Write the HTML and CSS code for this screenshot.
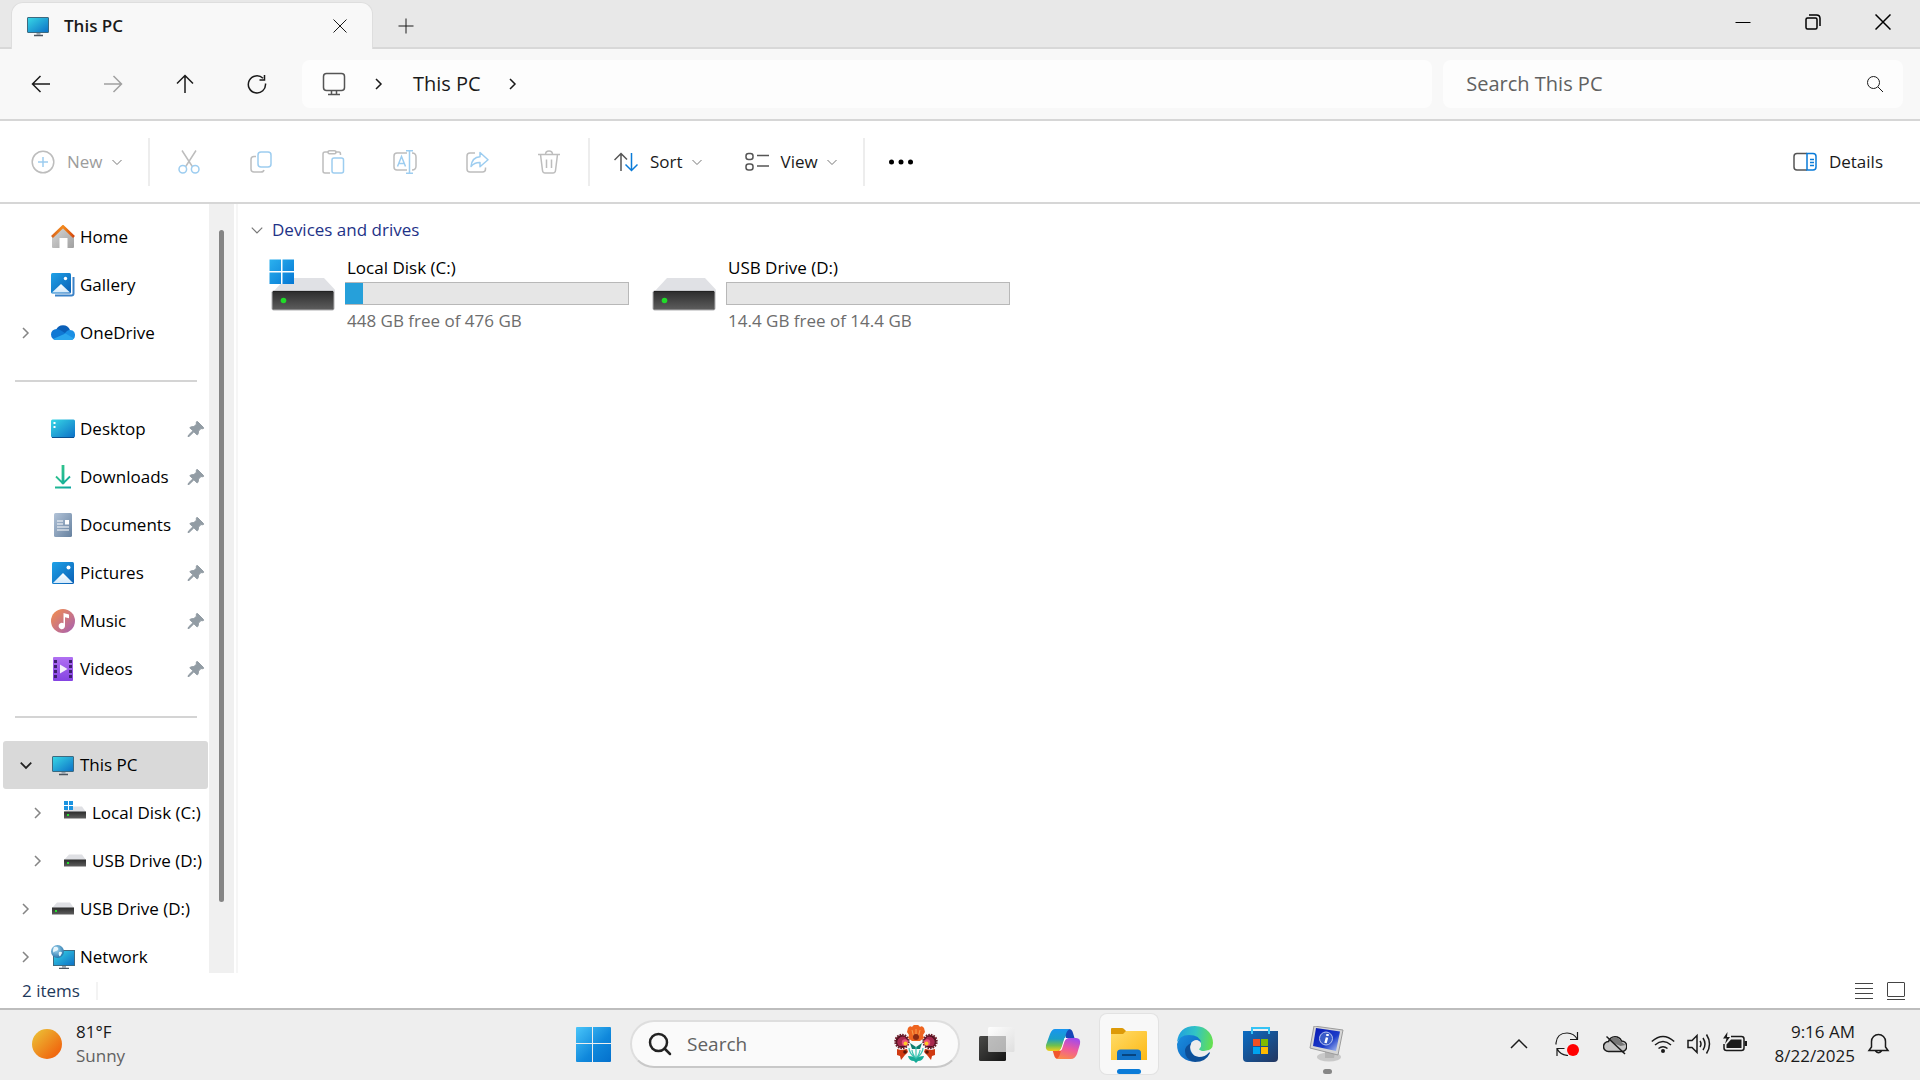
FILE: index.html
```html
<!DOCTYPE html>
<html lang="en">
<head>
<meta charset="utf-8">
<title>This PC</title>
<meta name="viewport" content="width=device-width, initial-scale=1">
<link rel="stylesheet" href="styles.css">
</head>
<body>
<svg class="sprite" aria-hidden="true">
  <defs>
    <linearGradient id="g-screen" x1="0" y1="0" x2="1" y2="1"><stop offset="0" stop-color="#38d8e6"/><stop offset="1" stop-color="#0c6fc6"/></linearGradient>
    <linearGradient id="g-blue" x1="0" y1="0" x2="1" y2="1"><stop offset="0" stop-color="#1fa2e8"/><stop offset="1" stop-color="#0a5fb4"/></linearGradient>
    <linearGradient id="g-win" x1="0" y1="0" x2="1" y2="1"><stop offset="0" stop-color="#2bb1ee"/><stop offset="1" stop-color="#0577d4"/></linearGradient>
    <linearGradient id="g-snow" x1="0" y1="0" x2="0" y2="1"><stop offset="0" stop-color="#fff"/><stop offset="1" stop-color="#d3e9fa"/></linearGradient>
    <linearGradient id="g-wall" x1="0" y1="0" x2="1" y2="1"><stop offset="0" stop-color="#d8d8d8"/><stop offset="1" stop-color="#a0a0a0"/></linearGradient>
    <linearGradient id="g-roof" x1="0" y1="0" x2="1" y2="0"><stop offset="0" stop-color="#d9641a"/><stop offset=".5" stop-color="#f48a1c"/><stop offset="1" stop-color="#d4460c"/></linearGradient>
    <linearGradient id="g-down" x1="0" y1="0" x2="1" y2="1"><stop offset="0" stop-color="#3acb86"/><stop offset="1" stop-color="#09a5a0"/></linearGradient>
    <linearGradient id="g-doc" x1="0" y1="0" x2="1" y2="1"><stop offset="0" stop-color="#b2c3d8"/><stop offset="1" stop-color="#66819f"/></linearGradient>
    <linearGradient id="g-music" x1="0" y1="0" x2="1" y2="1"><stop offset="0" stop-color="#f58f4a"/><stop offset="1" stop-color="#a55fb5"/></linearGradient>
    <linearGradient id="g-video" x1="0" y1="0" x2="0" y2="1"><stop offset="0" stop-color="#b070f2"/><stop offset="1" stop-color="#8443e2"/></linearGradient>
    <linearGradient id="g-drive" x1="0" y1="0" x2="0" y2="1"><stop offset="0" stop-color="#2c2c2c"/><stop offset="1" stop-color="#5e5e5e"/></linearGradient>
    <linearGradient id="g-sun" x1="0" y1="0" x2="1" y2="1"><stop offset=".1" stop-color="#ecbc34"/><stop offset=".8" stop-color="#f06a10"/></linearGradient>
    <radialGradient id="g-globe" cx=".4" cy=".35" r=".7"><stop offset="0" stop-color="#a8dcf5"/><stop offset="1" stop-color="#1f6da4"/></radialGradient>
    <symbol id="i-chev" viewBox="0 0 12 12"><path d="M3 1l5 5-5 5"/></symbol>
    <symbol id="i-down" viewBox="0 0 12 12"><path d="M1.500 4L6 8.500 10.500 4"/></symbol>
    <symbol id="i-pc" viewBox="0 0 24 24"><path d="M8 21.500h9" stroke="#4c5560" stroke-width="1.500"/><path d="M10.500 18h4v3h-4z" fill="#9aa3ab"/><rect x="1.500" y="3.500" width="21" height="15" rx=".5" fill="url(#g-screen)" stroke="#3d6a80"/></symbol>
    <symbol id="i-pin" viewBox="0 0 18 18"><path d="M10.500 1.500l6 6c.5.900-.2 1.400-1.200 1.200l-1.300-.1-2.500 2.500c.1 1.500-.1 2.900-1.300 3.900L6.900 11.800 2.300 16.200 1 16.600l.5-1.500 4.400-4.300L2.800 7.700C4 6.700 5.300 6.500 6.900 6.600l2.500-2.400-.1-1.300c-.1-1.200.5-1.700 1.200-1.400z" fill="#929ca4" stroke="#929ca4"/></symbol>
    <symbol id="i-drive" viewBox="0 0 66 54"><path d="M17 20h38l13 14H4z" fill="#e0e1e5"/><rect x="3" y="33" width="62" height="19" rx="1.500" fill="url(#g-drive)" stroke="#b0b0b2"/><path d="M4 33.500h60" stroke="#222"/><circle cx="14.500" cy="42.500" r="2.800" fill="#20dc28"/></symbol>
    <symbol id="i-drive-s" viewBox="0 0 24 24"><path d="M6 5.500h13l4 5.500H1z" fill="#dfe0e4"/><rect x="1" y="10.500" width="22" height="7" fill="url(#g-drive)"/><rect x="4" y="13" width="2" height="2" fill="#25e02e"/></symbol>
  </defs>
</svg>

<div class="window">
  <header class="tabstrip">
    <div class="tab">
      <svg class="ic24"><use href="#i-pc"/></svg>
      <span class="tab-title">This PC</span>
      <button class="bare" aria-label="Close tab"><svg class="ic16 line" viewBox="0 0 16 16"><path d="M1.500 1.500l13 13M14.500 1.500l-13 13"/></svg></button>
    </div>
    <button class="bare new-tab" aria-label="New tab"><svg class="ic16 line" viewBox="0 0 16 16"><path d="M8 .5v15M.5 8h15"/></svg></button>
    <div class="caption">
      <button class="bare" aria-label="Minimize"><svg class="ic16 line" viewBox="0 0 16 16"><path d="M.5 8.500h15"/></svg></button>
      <button class="bare" aria-label="Restore"><svg class="ic16 line bold" viewBox="0 0 16 16"><rect x="1" y="4" width="11" height="11" rx="1.500"/><path d="M4 1h7.500Q15 1 15 4.500V12"/></svg></button>
      <button class="bare" aria-label="Close"><svg class="ic16 line bold" viewBox="0 0 16 16"><path d="M.5.5l15 15M15.500.5l-15 15"/></svg></button>
    </div>
  </header>

  <div class="addressbar">
    <div class="nav-buttons">
      <button class="bare" aria-label="Back"><svg class="ic20 line bold" viewBox="0 0 20 20"><path d="M19 10H1.500M9.500 2L1.500 10l8 8"/></svg></button>
      <button class="bare" aria-label="Forward" disabled><svg class="ic20 line bold" viewBox="0 0 20 20"><path d="M1 10h17.500M10.500 2l8 8-8 8"/></svg></button>
      <button class="bare" aria-label="Up"><svg class="ic20 line bold" viewBox="0 0 20 20"><path d="M10 19V1.500M2 9.500l8-8 8 8"/></svg></button>
      <button class="bare" aria-label="Refresh"><svg class="ic20 line bold" viewBox="0 0 20 20"><path d="M18.500 9.500A8.600 8.600 0 1 1 16 4.300M17.500 1v5h-5"/></svg></button>
    </div>
    <nav class="crumbs" aria-label="Address">
      <svg class="ic24 line monitor" viewBox="0 0 24 24"><rect x="1.500" y="1.500" width="21" height="17" rx="3"/><path d="M9.500 18.500v4M14.500 18.500v4M6 22.500h12"/></svg>
      <svg class="ic12 line bold"><use href="#i-chev"/></svg>
      <a href="#">This PC</a>
      <svg class="ic12 line bold"><use href="#i-chev"/></svg>
    </nav>
    <form class="find">
      <input type="text" placeholder="Search This PC" aria-label="Search This PC">
      <button class="bare" type="button" aria-label="Search"><svg class="ic16 line" viewBox="0 0 16 16"><circle cx="6.500" cy="6.500" r="6"/><path d="M11 11l5 5"/></svg></button>
    </form>
  </div>

  <div class="commands">
    <button class="cmd new" disabled><svg class="ic24 thin" viewBox="0 0 24 24"><circle cx="12" cy="12" r="10.800" stroke="#bdbdbd"/><path d="M12 7v10M7 12h10" stroke="#9dcdf0"/></svg><span>New</span><svg class="ic12 line"><use href="#i-down"/></svg></button>
    <span class="rule"></span>
    <div class="tools">
      <button class="bare" aria-label="Cut" disabled><svg class="ic24 thin" viewBox="0 0 24 24"><path d="M5 .5l10.300 16M19 .5L8.700 16.500" stroke="#bdbdbd"/><circle cx="5.800" cy="19.300" r="3.800" stroke="#9dcdf0"/><circle cx="18.200" cy="19.300" r="3.800" stroke="#9dcdf0"/></svg></button>
      <button class="bare" aria-label="Copy" disabled><svg class="ic24 thin" viewBox="0 0 24 24"><path d="M7 6.500H5Q2 6.500 2 9.500V19q0 3 3 3h7q2.500 0 3-2" stroke="#bdbdbd"/><rect x="9" y="2" width="13" height="15" rx="3" stroke="#9dcdf0"/></svg></button>
      <button class="bare" aria-label="Paste" disabled><svg class="ic24 thin" viewBox="0 0 24 24"><path d="M7 2H4Q2 2 2 4v17q0 2 2 2h5M14 2h4q1.500 0 1.500 2.500V5" stroke="#bdbdbd"/><rect x="7" y=".8" width="8" height="3" rx="1.500" stroke="#bdbdbd"/><rect x="11" y="8" width="11.500" height="15" rx="2" stroke="#9dcdf0"/></svg></button>
      <button class="bare" aria-label="Rename" disabled><svg class="ic24 thin" viewBox="0 0 24 24"><path d="M14 3H4Q1 3 1 6v11q0 3 3 3h10M19 3q4 0 4 4v9q0 4-4 4" stroke="#bdbdbd"/><path d="M4.500 16.500L8.500 6.500l4 10M6 13.500h5M13 .8h7M13 23.200h7M16.500.8v22.400" stroke="#9dcdf0"/></svg></button>
      <button class="bare" aria-label="Share" disabled><svg class="ic24 thin" viewBox="0 0 24 24"><path d="M10 3H5Q2 3 2 6v13q0 3 3 3h12.500q3 0 3-3v-1.500" stroke="#bdbdbd"/><path d="M15 2.500l8 7.200-8 7v-4.200q-5.500-.2-9 4 1-9.500 9-9.800z" stroke="#9dcdf0" stroke-linejoin="round"/></svg></button>
      <button class="bare" aria-label="Delete" disabled><svg class="ic24 thin" viewBox="0 0 24 24"><path d="M1 4.500h22M8.500 4.500Q8.500 1 12 1t3.500 3.500M3.500 4.500l2 16q.3 2.500 2.500 2.500h8q2.200 0 2.500-2.500l2-16M9.500 9.500v8.500M14.500 9.500v8.500" stroke="#bdbdbd"/></svg></button>
    </div>
    <span class="rule"></span>
    <button class="cmd"><svg class="ic24 thin" viewBox="0 0 24 24"><path d="M7 21V3.500M.5 10L7 3.500l6 6" stroke="#555"/><path d="M17.500 3v17.500M11.500 14.500l6 6 6-6" stroke="#0a7bd8"/></svg><span>Sort</span><svg class="ic12 line"><use href="#i-down"/></svg></button>
    <button class="cmd"><svg class="ic24 thin" viewBox="0 0 24 24"><g stroke="#555"><rect x="1" y="3.500" width="7" height="6" rx="2.500"/><rect x="1" y="14" width="7" height="6" rx="2.500"/><path d="M12 5.500h12M12 16h12"/></g></svg><span>View</span><svg class="ic12 line"><use href="#i-down"/></svg></button>
    <span class="rule"></span>
    <button class="bare more" aria-label="See more"><svg class="ic24" viewBox="0 0 24 24"><circle cx="2.500" cy="12" r="2.500"/><circle cx="12" cy="12" r="2.500"/><circle cx="21.500" cy="12" r="2.500"/></svg></button>
    <button class="cmd details"><svg class="ic24 thin" viewBox="0 0 24 24"><path d="M14 3.500H4Q1 3.500 1 6.500v10.500q0 3 3 3h10" stroke="#555"/><path d="M14 3.500h6q3 0 3 3v10.500q0 3-3 3h-6zM17 9.500h4M17 12.500h4M17 15.500h4" stroke="#0a7bd8"/></svg><span>Details</span></button>
  </div>

  <div class="body">
    <nav class="side" aria-label="Folders">
      <ul class="tree">
        <li><a href="#"><svg class="ic24" viewBox="0 0 24 24"><path d="M1 11.500L12 2l11 9.500V22q0 1-1 1h-5.500V13h-8v10H2q-1 0-1-1z" fill="url(#g-wall)"/><path d="M1 12L12 1.500 23 12" fill="none" stroke="url(#g-roof)" stroke-width="2.800"/></svg>Home</a></li>
        <li><a href="#"><svg class="ic24" viewBox="0 0 24 24"><path d="M22.500 4v16.500q0 2-2 2H4" fill="none" stroke="#3b82c8" stroke-width="2"/><rect width="20" height="20.500" rx="1.500" fill="url(#g-blue)"/><path d="M1 19.500L10 11l9 8.500z" fill="url(#g-snow)"/><circle cx="14.500" cy="5.500" r="1.700" fill="#fff"/></svg>Gallery</a></li>
        <li><button class="bare twist" aria-label="Expand"><svg class="ic12 line"><use href="#i-chev"/></svg></button><a href="#"><svg class="ic24" viewBox="0 0 24 24"><path d="M5 9a7.500 7.500 0 0 1 14 0l-7 6z" fill="#0a5fb8"/><path d="M5.500 19a5.500 5.500 0 0 1 0-11Q8 8 10 9.500l7 4.500-8 5z" fill="#1078d4"/><path d="M16 10a5 5 0 0 1 8 4.500A4.700 4.700 0 0 1 19.500 19H15l-2-6z" fill="#1a8fe4"/><path d="M2 18l12.500-5.500 8.500 5q-1.500 1.500-3.500 1.500h-14Q3.500 19 2 18z" fill="#2aa6ee"/></svg>OneDrive</a></li>
        <li class="sep"></li>
        <li><a href="#"><svg class="ic24" viewBox="0 0 24 24"><rect y="2.500" width="24" height="18" rx="1.500" fill="url(#g-screen)"/><path d="M1 20.500h22" stroke="#0b4f8f"/><path d="M2.500 5h2v2h-2zM2.500 9h2v2h-2z" fill="#fff"/></svg>Desktop</a><svg class="ic18"><use href="#i-pin"/></svg></li>
        <li><a href="#"><svg class="ic24" viewBox="0 0 24 24"><path d="M11.500 1h1v17h-1zM5 11.500l7 7 7-7M4 22.500h16" fill="none" stroke="url(#g-down)" stroke-width="1.800"/></svg>Downloads</a><svg class="ic18"><use href="#i-pin"/></svg></li>
        <li><a href="#"><svg class="ic24" viewBox="0 0 24 24"><rect x="3" width="18" height="24" rx="1.500" fill="url(#g-doc)"/><path d="M6 8h6M6 11h6M6 14h12M6 17h12" stroke="#fff"/><path d="M14 7h4v4.500h-4z" fill="#fff"/></svg>Documents</a><svg class="ic18"><use href="#i-pin"/></svg></li>
        <li><a href="#"><svg class="ic24" viewBox="0 0 24 24"><rect x="1" y="1" width="22" height="22" rx="1.500" fill="url(#g-blue)"/><path d="M2 22l10-10 10 10z" fill="url(#g-snow)"/><circle cx="17.500" cy="6.500" r="2" fill="#fff"/></svg>Pictures</a><svg class="ic18"><use href="#i-pin"/></svg></li>
        <li><a href="#"><svg class="ic24" viewBox="0 0 24 24"><circle cx="12" cy="12" r="12" fill="url(#g-music)"/><path d="M12.500 4l5.500 1.500v3.700l-4-1V17a3.200 3.200 0 1 1-1.500-2.700z" fill="#fff"/></svg>Music</a><svg class="ic18"><use href="#i-pin"/></svg></li>
        <li><a href="#"><svg class="ic24" viewBox="0 0 24 24"><rect x="2" width="20" height="24" rx="1" fill="url(#g-video)"/><path d="M4.500 3v19M19.500 3v19" stroke="#3e2070" stroke-width="3" stroke-dasharray="3 2"/><path d="M9 7.500l7.500 4.500L9 16.500z" fill="#f4f0fa"/></svg>Videos</a><svg class="ic18"><use href="#i-pin"/></svg></li>
        <li class="sep"></li>
        <li class="current"><button class="bare twist" aria-label="Collapse"><svg class="ic14 line bold"><use href="#i-down"/></svg></button><a href="#"><svg class="ic24"><use href="#i-pc"/></svg>This PC</a></li>
        <li class="child"><button class="bare twist" aria-label="Expand"><svg class="ic12 line"><use href="#i-chev"/></svg></button><a href="#"><svg class="ic24" viewBox="0 0 24 24"><use href="#i-drive-s"/><path d="M1 0h9v9H1z" fill="#fff"/><path d="M1 0h4v4H1zM6 0h4v4H6zM1 5h4v4H1zM6 5h4v4H6z" fill="#1b93e0"/></svg>Local Disk (C:)</a></li>
        <li class="child"><button class="bare twist" aria-label="Expand"><svg class="ic12 line"><use href="#i-chev"/></svg></button><a href="#"><svg class="ic24"><use href="#i-drive-s"/></svg>USB Drive (D:)</a></li>
        <li><button class="bare twist" aria-label="Expand"><svg class="ic12 line"><use href="#i-chev"/></svg></button><a href="#"><svg class="ic24"><use href="#i-drive-s"/></svg>USB Drive (D:)</a></li>
        <li><button class="bare twist" aria-label="Expand"><svg class="ic12 line"><use href="#i-chev"/></svg></button><a href="#"><svg class="ic24" viewBox="0 0 24 24"><path d="M8 23.500h10" stroke="#4c5560" stroke-width="1.500"/><path d="M11 20h4v3h-4z" fill="#9aa3ab"/><rect x="2.500" y="5.500" width="21" height="15" fill="url(#g-screen)" stroke="#3d6a80"/><circle cx="6.500" cy="6.500" r="6.500" fill="url(#g-globe)"/><path d="M3 2q3-1 4 1T5 6 3 8Q1 6 3 2zM8 7q3-1 3 1l-2 3.500Q7 10 8 7z" fill="#e8f6fc"/></svg>Network</a></li>
      </ul>
      <div class="scroll"><span class="thumb"></span></div>
    </nav>
    <main class="content">
      <button class="group"><svg class="ic14 line"><use href="#i-down"/></svg><span>Devices and drives</span></button>
      <div class="drives">
        <a class="drive" href="#">
          <svg class="big" viewBox="0 0 66 54"><use href="#i-drive"/><path d="M0 0h25v26H0z" fill="#fff" fill-opacity=".8"/><path d="M.5 1.500H12v11.500H.5zM13.500 1.500H25v11.500H13.500zM.5 14.500H12V26H.5zM13.500 14.500H25V26H13.500z" fill="url(#g-win)"/></svg>
          <span class="info"><span class="name">Local Disk (C:)</span><progress value="30" max="476" aria-label="Used space on C"></progress><span class="free">448 GB free of 476 GB</span></span>
        </a>
        <a class="drive" href="#">
          <svg class="big"><use href="#i-drive"/></svg>
          <span class="info"><span class="name">USB Drive (D:)</span><progress value="0" max="14" aria-label="Used space on D"></progress><span class="free">14.4 GB free of 14.4 GB</span></span>
        </a>
      </div>
    </main>
  </div>

  <footer class="status">
    <span class="count">2 items</span>
    <button class="bare" aria-label="Details view"><svg class="ic20 line" viewBox="0 0 20 20"><path d="M1 2.500h18M1 7.500h18M1 12.500h18M1 17.500h18"/></svg></button>
    <button class="bare" aria-label="Large icons view"><svg class="ic20 line" viewBox="0 0 20 20"><rect x="1.500" y="1.500" width="17" height="14" rx=".5"/><path d="M1 18.500h18"/></svg></button>
  </footer>
</div>

<div class="taskbar">
  <button class="bare weather">
    <svg class="sun" viewBox="0 0 30 30"><circle cx="15" cy="15" r="15" fill="url(#g-sun)"/></svg>
    <span class="lines"><span>81°F</span><span class="muted">Sunny</span></span>
  </button>
  <div class="apps">
    <button class="bare app" aria-label="Start"><svg class="ic36" viewBox="0 0 36 36"><defs><linearGradient id="g-start" gradientUnits="userSpaceOnUse" x1="0" y1="0" x2="36" y2="36"><stop offset="0" stop-color="#4cc8fb"/><stop offset=".6" stop-color="#0f87db"/><stop offset="1" stop-color="#0470cc"/></linearGradient></defs><path d="M2 1h15v16H1V2q0-1 1-1zM18 1h17q1 0 1 1v15H18zM1 18h16v18H2q-1 0-1-1zM18 18h18v17q0 1-1 1H18z" fill="url(#g-start)"/></svg></button>
    <label class="pill">
      <svg class="ic24 glass" viewBox="0 0 24 24"><circle cx="10.500" cy="10.500" r="8.500"/><path d="M16.500 16.500l5.500 5.500" stroke-linecap="round"/></svg>
      <input type="text" placeholder="Search" aria-label="Search">
      <svg class="bloom" viewBox="0 0 44 38">
        <g id="wing"><circle cx="8" cy="16.500" r="6.500" fill="#4a1220" stroke="#6b1a28" stroke-width="2.500" stroke-dasharray="1.500 1"/><path d="M5 21a5.500 5.500 0 0 1 6-9l3 5-2 4z" fill="#a8294e"/><circle cx="11" cy="17.500" r="3.200" fill="#e8507c"/><circle cx="11.500" cy="18.500" r="2" fill="#ffc928"/><path d="M3 24l4 1 6-1 1 3-3 3-4 5-1-4-3-1z" fill="#cf3a12"/><circle cx="11" cy="27" r="1.800" fill="#5c1608"/></g>
        <use href="#wing" transform="matrix(-1 0 0 1 44 0)"/>
        <path d="M14 3q2-3 4-1 2-3 4-2 2-1 4 2 2-2 4 1l1 4-2 3 1 3-4 3h-8l-4-3 1-3-2-3z" fill="#ee6420"/><path d="M18 5l1.500 6M22 4v6M26 5l-1.500 6" stroke="#f9a050"/><circle cx="22" cy="12" r="3" fill="#8c2a14"/>
        <path d="M16 18l6 4 6-4-2 6h-8z" fill="#0f7d70"/><path d="M22 22v14M22 34q-7-6-7-11M22 34q7-6 7-11M22 34q-4-6-4-9M22 34q4-6 4-9" fill="none" stroke="#3cc4b2" stroke-width="1.200"/><path d="M14 31q6 0 8 3 2-3 8-3-1 5-6 5l-2 2-2-2q-5 0-6-5z" fill="#18ab98"/>
      </svg>
    </label>
    <button class="bare app" aria-label="Task View"><svg class="ic36" viewBox="0 0 36 36"><defs><linearGradient id="g-tv" x1="0" y1="0" x2="1" y2="1"><stop offset="0" stop-color="#4a4a48"/><stop offset="1" stop-color="#151515"/></linearGradient><linearGradient id="g-tw" x1="0" y1="0" x2="1" y2="1"><stop offset="0" stop-color="#fff"/><stop offset="1" stop-color="#dedede"/></linearGradient></defs><rect y="10" width="27" height="25" rx="1.500" fill="url(#g-tv)"/><rect x="9" y="1" width="26.500" height="25" rx="1.500" fill="url(#g-tw)" fill-opacity=".95"/><path d="M9 10h18v16H9z" fill="#8c8c8c" opacity=".5"/></svg></button>
    <button class="bare app" aria-label="Copilot"><svg class="ic36" viewBox="0 0 36 36"><defs><linearGradient id="g-c1" x1="0" y1="0" x2="0" y2="1"><stop offset="0" stop-color="#1895f0"/><stop offset=".45" stop-color="#1a9fc8"/><stop offset=".75" stop-color="#6fc04e"/><stop offset="1" stop-color="#f2cf1c"/></linearGradient><linearGradient id="g-c2" x1=".6" y1="0" x2=".3" y2="1"><stop offset="0" stop-color="#a54bea"/><stop offset=".5" stop-color="#ef5a9a"/><stop offset="1" stop-color="#fb8a4b"/></linearGradient></defs><path d="M18 3h6q3 0 4 4l1.500 5H21z" fill="#1747b8"/><path d="M18 33h-5q-3 0-4-4l-1.500-5H17z" fill="#f2552c"/><path d="M10 3h15q-3 1-4 5l-3.500 12.500Q16 25 12 25H5q-5 0-4-6L5 8q2-5 5-5z" fill="url(#g-c1)"/><path d="M26 33H11q3-1 4-5l3.500-12.500Q20 12 24 12h7q5 0 4 6l-3 10q-2 5-6 5z" fill="url(#g-c2)"/><path d="M19.500 12H23q-3 1-4 5l-2 6q-.7 2-3 2 2-1 3-5z" fill="#fff"/></svg></button>
    <button class="bare app open" aria-label="File Explorer"><svg class="ic36" viewBox="0 0 36 36"><defs><linearGradient id="g-f" x1="0" y1="0" x2="1" y2="1"><stop offset="0" stop-color="#ffdc6a"/><stop offset="1" stop-color="#fdb813"/></linearGradient></defs><path d="M0 3q0-1 1-1h10q1 0 2 1l2 2h20v6H0z" fill="#dd9a08"/><path d="M0 8h12l3-3h20q1 0 1 1v28H0z" fill="url(#g-f)"/><path d="M6 34V27q0-3.500 3.500-3.500h17q3.500 0 3.500 3.500v7z" fill="#1173c9"/><path d="M11 29h14" stroke="#07447f" stroke-width="2"/></svg></button>
    <button class="bare app" aria-label="Microsoft Edge"><svg class="ic36" viewBox="0 0 36 36"><defs><linearGradient id="g-e1" x1="0" y1=".4" x2="1" y2=".5"><stop offset="0" stop-color="#1f9fe0"/><stop offset=".5" stop-color="#32c4c4"/><stop offset="1" stop-color="#66e04e"/></linearGradient><linearGradient id="g-e2" x1="0" y1="0" x2="1" y2="1"><stop offset="0" stop-color="#1a8fe0"/><stop offset="1" stop-color="#0c5cb8"/></linearGradient></defs><path d="M0 16Q2 0 18 0q9 0 14 6 4 5 4 11 0 8-9 8-5 0-5-2 2-2 2-5 0-5-6-5.500Q5 9 0 16z" fill="url(#g-e1)"/><path d="M0 18Q2 9 12 9q11 0 12 8-5-5-9-1-4 5 0 11l6 7q-3 2-6 1.500Q0 33 0 18z" fill="url(#g-e2)"/><path d="M14 17q-4 12 8 14 6 0 10-4.500.8-.5 1 .5Q29 36 18 36 8 34 8 25q0-5 6-8z" fill="#0d4f98"/><path d="M14.500 16.500Q17 14 20 14q4 1 4 5 0 2-2 4 0 2 5 2 2 0 5-1-3 4-8 4-8-2-9.500-11.500z" fill="#ededed"/></svg></button>
    <button class="bare app" aria-label="Microsoft Store"><svg class="ic36" viewBox="0 0 36 36"><defs><linearGradient id="g-s" x1="0" y1="0" x2="1" y2="1"><stop offset="0" stop-color="#0a6cc4"/><stop offset="1" stop-color="#24365f"/></linearGradient></defs><path d="M0 5h35v27q0 4-4 4H4q-4 0-4-4z" fill="url(#g-s)"/><path d="M9 8V2h17v6" fill="none" stroke="#35c3f5" stroke-width="2"/><path d="M10 13h7v7h-7z" fill="#f25022"/><path d="M18 13h7v7h-7z" fill="#7fba00"/><path d="M10 21h7v7h-7z" fill="#00a4ef"/><path d="M18 21h7v7h-7z" fill="#ffb900"/></svg></button>
    <button class="bare app running" aria-label="System Information"><svg class="ic36" viewBox="0 0 36 36"><defs><linearGradient id="g-m" x1="0" y1="0" x2="1" y2="1"><stop offset="0" stop-color="#0616b4"/><stop offset=".6" stop-color="#1c3cc8"/><stop offset="1" stop-color="#b8ccf6"/></linearGradient></defs><ellipse cx="20" cy="31" rx="12" ry="4.500" fill="#c9c9c9"/><path d="M16 25l10 1-1 6h-9z" fill="#b4b4b4"/><path d="M5 0l29 4-5 25L1 22z" fill="#d6d6d6" stroke="#9b9b9b"/><path d="M7 2l24 3.500L27 25 4 20z" fill="url(#g-m)"/><circle cx="17" cy="12.500" r="6.500" fill="#3a5cc8" stroke="#b9c6ee"/><path d="M18.500 8v2M18 11.500l-1.500 5.500" stroke="#fff" stroke-width="2.500"/></svg></button>
  </div>
  <div class="tray">
    <button class="bare" aria-label="Show hidden icons"><svg class="ic24 line bold" viewBox="0 0 24 24"><path d="M4 16l8-8 8 8"/></svg></button>
    <button class="bare" aria-label="Windows Update"><svg class="ic24 line" viewBox="0 0 24 24"><path d="M1 12.500V11Q2 1 12 1q7 0 10.500 6.500M22.500 0v7.500H15M2 24v-7.500h7.500M2 16.500q3 6.500 11 7" stroke-width="1.200"/><circle cx="18" cy="18" r="6" fill="#f00" stroke="none"/></svg></button>
    <button class="bare" aria-label="OneDrive offline"><svg class="ic24 line" viewBox="0 0 24 24"><path d="M5.500 19.500a5 5 0 0 1 0-10A7 7 0 0 1 18.500 9a5.300 5.300 0 0 1 1 10.500z" fill="#c4c4c4" stroke-width="1.500"/><path d="M7 8q5-7 11.500 2l4 3-5 1-5-2z" fill="#777" stroke="none"/><path d="M3.500 4.500L22 22" stroke-width="1.500"/></svg></button>
    <button class="bare trio" aria-label="Network, volume and battery">
      <svg class="ic24 line bold" viewBox="0 0 24 24"><path d="M.8 9.500Q12-.5 23.200 9.500M4 13q8-7 16 0M7.500 16.500q4.500-3.500 9 0"/><circle cx="12" cy="19" r="2" fill="#1a1a1a" stroke="none"/></svg>
      <svg class="ic24 line bold" viewBox="0 0 24 24"><path d="M1 8.500h4l5-5v17l-5-5H1zM13 9q2 3 0 6M16 6q4 6 0 12M19.500 2.500q6 9.500 0 19"/></svg>
      <svg class="ic24 line bold" viewBox="0 0 24 24"><path d="M8 4.500h10.500q2.500 0 2.500 2.500v9q0 2.500-2.500 2.500h-15Q1 18.500 1 16v-4"/><path d="M8 7.500h10.500v8.500H3.500v-3.500zM21.500 9h2.500v5h-2.500zM4.500 0L0 6.500h3.500L2 12l5-7H4z" fill="#1a1a1a" stroke="none"/></svg>
    </button>
    <button class="bare clock"><span class="lines"><time>9:16 AM</time><time>8/22/2025</time></span><svg class="ic24 line bold" viewBox="0 0 24 24"><path d="M3 18.500h19l-2.500-3.500V9.500a7 7 0 0 0-14 0V15zM9.500 19q3 3.500 6 0"/></svg></button>
  </div>
</div>
</body>
</html>
```
FILE: styles.css
```css
* { box-sizing: border-box; }

body {
  margin: 0;
  height: 100vh;
  display: flex;
  flex-direction: column;
  overflow: hidden;
  background: #fff;
  color: #1a1a1a;
  font: 17px/24px "Open Sans", "Noto Sans", sans-serif;
}

button, input { font: inherit; color: inherit; }
a { color: inherit; text-decoration: none; }
svg { display: block; flex: none; }

.sprite { position: absolute; width: 0; height: 0; }
.ic12 { width: 12px; height: 12px; }
.ic14 { width: 14px; height: 14px; }
.ic16 { width: 16px; height: 16px; }
.ic18 { width: 18px; height: 18px; }
.ic20 { width: 20px; height: 20px; }
.ic24 { width: 24px; height: 24px; }
.ic36 { width: 36px; height: 36px; }
.line { fill: none; stroke: currentColor; stroke-width: 1; }
.line.bold { stroke-width: 1.500; }
.thin { fill: none; stroke-width: 1.500; }

.bare {
  display: flex;
  align-items: center;
  justify-content: center;
  padding: 0;
  border: 0;
  background: none;
}

.window {
  flex: 1;
  min-height: 0;
  display: flex;
  flex-direction: column;
}

/* Tab strip */
.tabstrip {
  display: flex;
  height: 49px;
  padding: 2px 0 0 11px;
  background: #e8e8e8;
  box-shadow: inset 0 -2px #d8d8d8;
}
.tab {
  display: flex;
  align-items: center;
  width: 362px;
  padding: 0 24px 0 14px;
  border: 1px solid #dedede;
  border-bottom: 0;
  border-radius: 12px 12px 0 0;
  background: #f8f8f8;
}
.tab-title { flex: 1; padding-left: 14px; font-weight: 600; }
.new-tab { width: 66px; }
.caption { display: flex; height: 40px; margin-left: auto; padding-right: 2px; }
.caption .bare { width: 70px; color: #000; }

/* Address row */
.addressbar {
  display: flex;
  align-items: center;
  height: 72px;
  padding-right: 17px;
  border-bottom: 2px solid #d6d6d6;
  background: #f8f8f8;
}
.nav-buttons { display: flex; width: 302px; padding-left: 5px; }
.nav-buttons .bare { width: 72px; height: 48px; }
.nav-buttons .bare:disabled { color: #a0a0a0; }
.crumbs {
  flex: 1;
  display: flex;
  align-items: center;
  height: 48px;
  padding-left: 20px;
  border-radius: 8px;
  background: #fdfdfd;
  font-size: 20px;
}
.crumbs a { margin: 0 26px 0 28px; }
.monitor { margin-right: 27px; stroke: #555; stroke-width: 1.500; }
.find {
  display: flex;
  width: calc(24% + 3px);
  height: 48px;
  margin-left: 11px;
  padding: 0 20px 0 23px;
  border-radius: 8px;
  background: #fdfdfd;
}
.find input, .pill input {
  flex: 1;
  min-width: 0;
  padding: 0;
  border: 0;
  outline: 0;
  background: none;
  font-size: 19px;
}
.find input { font-size: 20px; }
input::placeholder { color: #616161; opacity: 1; }

/* Command bar */
.commands {
  display: flex;
  align-items: center;
  height: 83px;
  padding: 0 37px 0 31px;
  border-bottom: 2px solid #d6d6d6;
}
.cmd {
  display: flex;
  align-items: center;
  gap: 12px;
  padding: 0;
  border: 0;
  background: none;
}
.cmd .ic12 { margin-left: -4px; color: #777; }
.cmd + .cmd { margin-left: 42px; }
.new { width: 117px; color: #9c9c9c; }
.rule { width: 2px; height: 48px; background: #ededed; }
.rule + .cmd { margin-left: 24px; }
.tools { display: flex; padding: 0 3px; }
.tools .bare { width: 72px; height: 48px; }
.cmd + .rule { margin-left: 25px; }
.new + .rule { margin-left: 0; }
.more { width: 72px; height: 48px; }
.details { margin-left: auto; }

/* Folder tree */
.body { flex: 1; min-height: 0; display: flex; }
.side {
  display: flex;
  width: 238px;
  border-right: 2px solid #f6f6f6;
}
.tree {
  flex: 1;
  min-width: 0;
  margin: 0;
  padding: 9px 1px 0 3px;
  overflow: hidden;
  list-style: none;
  color: #000;
}
.tree li {
  display: flex;
  align-items: center;
  height: 48px;
  padding-left: 48px;
}
.tree a {
  flex: 1;
  display: flex;
  align-items: center;
  gap: 5px;
  white-space: nowrap;
}
.tree .ic18 { margin-right: 3px; }
.tree .twist { width: 24px; height: 24px; margin: 0 13px 0 -37px; color: #858585; }
.tree .twist .line { stroke-width: 1.500; }
.tree .child { padding-left: 60px; }
.tree .sep { padding: 0 11px 0 12px; }
.sep::before { content: ""; flex: 1; height: 2px; background: #d4d4d4; }
.tree .current { border-radius: 3px; background: #d9d9d9; }
.tree .current .twist { color: #222; }
.scroll {
  display: flex;
  flex-direction: column;
  width: 25px;
  margin-right: 2px;
  padding: 26px 10px 71px;
  background: #f0f0f0;
}
.thumb { flex: 1; border-radius: 3px; background: #858585; }

/* Drives */
.content { flex: 1; min-width: 0; padding: 14px 12px; }
.group {
  display: flex;
  align-items: center;
  gap: 8px;
  padding: 0;
  border: 0;
  background: none;
  color: #1e3287;
}
.group .ic14 { color: #777; }
.drives { display: flex; flex-wrap: wrap; gap: 21px; padding: 14px 19px; }
.drive { display: flex; gap: 10px; width: 360px; }
.big { width: 66px; height: 54px; margin-top: 2px; }
.info { flex: 1; display: flex; flex-direction: column; }
.name { padding-left: 2px; color: #000; }
.free { padding: 4px 0 0 2px; color: #6d6d6d; }
progress {
  display: block;
  width: 100%;
  height: 23px;
  margin-top: 2px;
  border: 0;
  appearance: none;
}
progress::-webkit-progress-bar { background: #e6e6e6; box-shadow: inset 0 0 0 1px #b8b8b8; }
progress::-webkit-progress-value { border-block: 1px solid #b8b8b8; background: #26a0da; }

/* Status bar */
.status {
  display: flex;
  align-items: center;
  gap: 12px;
  height: 35px;
  padding: 0 14px 0 22px;
}
.count { margin-right: auto; padding-right: 16px; border-right: 2px solid #f3f3f3; color: #1e395b; line-height: 18px; }
.status .bare { color: #444; }

/* Taskbar */
.taskbar {
  display: grid;
  grid-template-columns: 1fr auto 1fr;
  align-items: center;
  height: 72px;
  padding-bottom: 2px;
  border-top: 2px solid #bdbdbd;
  background: #eee;
}
.weather { justify-self: start; gap: 14px; padding-left: 32px; text-align: left; }
.sun { width: 30px; height: 30px; }
.lines { display: flex; flex-direction: column; }
.muted { color: #616161; }
.apps { display: flex; align-items: center; }
.app {
  position: relative;
  width: 58px;
  height: 60px;
  margin: 0 4px;
  border-radius: 7px;
}
.app.open { background: #f8f8f8; box-shadow: 0 0 0 1px #e2e2e2; }
.app.open::after, .app.running::after {
  content: "";
  position: absolute;
  bottom: 0;
  width: 24px;
  height: 5px;
  border-radius: 3px;
  background: #0a7bd8;
}
.app.running::after { width: 9px; background: #868686; }
.pill {
  display: flex;
  align-items: center;
  gap: 15px;
  width: 330px;
  height: 48px;
  margin: 0 4px;
  padding: 0 20px 0 16px;
  border: 2px solid #dedede;
  border-bottom-color: #c8c8c8;
  border-radius: 24px;
  background: #fafafa;
}
.glass { fill: none; stroke: #222; stroke-width: 2.500; }
.bloom { width: 44px; height: 38px; }
.tray { display: flex; align-items: center; justify-content: flex-end; padding-right: 30px; }
.tray .bare { width: 48px; height: 48px; }
.tray .trio { width: 108px; gap: 12px; margin-left: 6px; }
.tray .clock { width: auto; gap: 11px; margin-left: 21px; text-align: right; }
```
